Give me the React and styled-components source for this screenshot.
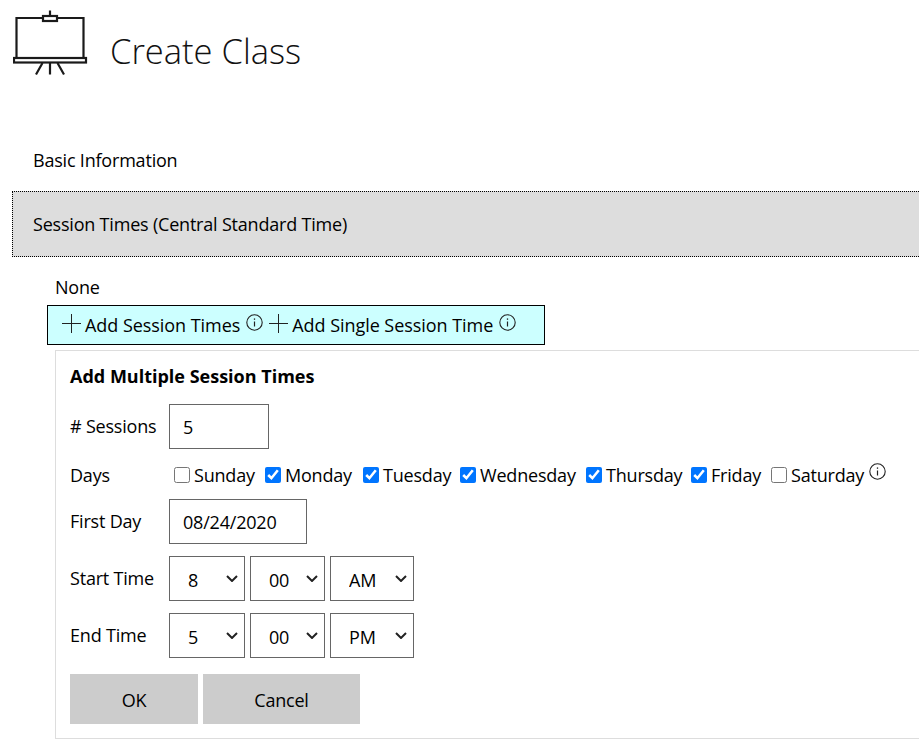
import React from 'react'
import styled, { createGlobalStyle } from 'styled-components'

const GlobalStyle = createGlobalStyle`
  html, body {
    margin: 0;
    padding: 0;
    background: #fff;
    overflow: hidden;
  }
  body {
    font-family: "Open Sans", "Noto Sans", sans-serif;
    font-size: 18px;
    letter-spacing: -0.2px;
    color: #000;
  }
`

const chevron = `url("data:image/svg+xml,%3Csvg xmlns='http://www.w3.org/2000/svg' width='12' height='7' fill='none' stroke='%23222' stroke-width='2'%3E%3Cpath d='M1 1l5 5 5-5'/%3E%3C/svg%3E")`

const Page = styled.div`
  width: 919px;
  height: 747px;
  overflow: hidden;
`

const PageHeader = styled.header`
  display: flex;
  align-items: center;
  height: 84px;
  padding: 0 0 0 13px;
  margin-bottom: 44px;
`

const BoardIcon = styled.svg`
  width: 76px;
  height: 70px;
  margin-top: 5px;
  flex: none;
`

const Title = styled.h1`
  margin: 16px 0 0 21px;
  font-size: 34.5px;
  font-weight: 300;
  letter-spacing: 0;
  color: #111;
`

const Section = styled.div`
  display: flex;
  align-items: center;
  margin-left: 12px;
  padding-left: ${p => (p.$active ? '20px' : '21px')};
  height: ${p => (p.$active ? '64px' : '63px')};
  background: ${p => (p.$active ? '#ddd' : 'transparent')};
  border: ${p => (p.$active ? '1px dotted #000' : 'none')};
  border-right: none;
`

const Body = styled.div`
  padding: 20px 0 0 47px;
`

const NoneText = styled.div`
  margin-left: 8px;
  height: 28px;
  line-height: 20px;
`

const AddBar = styled.div`
  display: flex;
  align-items: center;
  gap: 6px;
  box-sizing: border-box;
  width: 498px;
  height: 40px;
  padding-left: 14px;
  background: #ccffff;
  border: 1px solid #000;
`

const AddAction = styled.div`
  display: flex;
  align-items: center;
`

const AddLabel = styled.span`
  margin: 0 6px 0 4px;
  letter-spacing: -0.05px;
  white-space: nowrap;
`

const AddIcon = styled.svg`
  width: 19px;
  height: 19px;
  flex: none;
  margin-top: -3px;
`

const Info = styled.svg`
  width: 17px;
  height: 17px;
  flex: none;
  margin-top: ${p => p.$top ?? -6}px;
`

const Panel = styled.div`
  box-sizing: border-box;
  width: 900px;
  height: 389px;
  margin: 5px 0 0 8px;
  padding: 14px 14px 0;
  border: 1px solid #ddd;
  border-right: none;
`

const PanelTitle = styled.div`
  font-weight: 700;
  font-size: 18px;
  letter-spacing: 0;
  line-height: 22px;
  margin-bottom: 17px;
`

const Row = styled.div`
  display: flex;
  align-items: center;
  box-sizing: border-box;
  height: ${p => p.$height}px;
  padding-top: ${p => p.$top || 0}px;
  margin-bottom: ${p => p.$after || 0}px;
`

const RowLabel = styled.label`
  width: 99px;
  flex: none;
  padding-bottom: 2px;
`

const DaysLabel = styled(RowLabel)`
  padding-bottom: 0;
`

const TextInput = styled.input`
  box-sizing: border-box;
  width: ${p => p.$width}px;
  height: 45px;
  padding: 0 13px;
  border: 1px solid #666;
  border-radius: 0;
  font: inherit;
  letter-spacing: inherit;
  color: #000;
  outline: none;
`

const Days = styled.div`
  display: flex;
  align-items: center;
  margin-left: 4px;
`

const Day = styled.label`
  display: flex;
  align-items: center;
  width: ${p => p.$width}px;
  flex: none;
  white-space: nowrap;
`

const Check = styled.input.attrs({ type: 'checkbox' })`
  width: 16px;
  height: 16px;
  margin: 0 4px 0 1px;
  flex: none;
`

const Selects = styled.div`
  display: flex;
  gap: 5px;
`

const TimeSelect = styled.select`
  appearance: none;
  box-sizing: border-box;
  width: ${p => p.$width}px;
  height: 45px;
  padding: 2px 0 0 18px;
  border: 1px solid #666;
  border-radius: 0;
  background: #fff ${chevron} no-repeat right 6px center;
  font: inherit;
  letter-spacing: inherit;
  color: #000;
  outline: none;
`

const Buttons = styled.div`
  display: flex;
  gap: 5px;
  margin-top: 16px;
`

const Button = styled.button`
  width: ${p => p.$width}px;
  height: 50px;
  padding: 2px 0 0;
  border: none;
  background: #ccc;
  font: inherit;
  letter-spacing: inherit;
  color: #000;
`

function Board() {
  return (
    <BoardIcon viewBox="0 0 76 70" fill="none" stroke="#1a1a1a" strokeWidth="2.2">
      <path d="M3.5 48V8H70.5V48" />
      <rect x="30" y="6" width="14" height="5" fill="#fff" />
      <path d="M37 0.5V6" />
      <rect x="1" y="48" width="72" height="4.5" />
      <path d="M29.5 53L23 64.5M37 53V64.5M44.5 53L51 64.5" />
    </BoardIcon>
  )
}

function Plus() {
  return (
    <AddIcon viewBox="0 0 19 19" stroke="#222" strokeWidth="1" fill="none">
      <path d="M9.5 0V19M0 9.5H19" />
    </AddIcon>
  )
}

function InfoIcon({ top }) {
  return (
    <Info viewBox="0 0 17 17" $top={top} fill="none" stroke="#222">
      <circle cx="8.5" cy="8.5" r="7.7" strokeWidth="1.1" />
      <path d="M8.5 7.5V12.5" strokeWidth="1.2" />
      <path d="M8.5 4.4V5.8" strokeWidth="1.3" />
    </Info>
  )
}

const days = [
  { name: 'Sunday', width: 91, checked: false },
  { name: 'Monday', width: 98, checked: true },
  { name: 'Tuesday', width: 97, checked: true },
  { name: 'Wednesday', width: 126, checked: true },
  { name: 'Thursday', width: 105, checked: true },
  { name: 'Friday', width: 80, checked: true },
  { name: 'Saturday', width: 99, checked: false },
]

function Time({ hour, minute, ampm }) {
  return (
    <Selects>
      <TimeSelect $width={76} defaultValue={hour}>
        {[1, 2, 3, 4, 5, 6, 7, 8, 9, 10, 11, 12].map(h => <option key={h}>{h}</option>)}
      </TimeSelect>
      <TimeSelect $width={75} defaultValue={minute}>
        {['00', '15', '30', '45'].map(m => <option key={m}>{m}</option>)}
      </TimeSelect>
      <TimeSelect $width={84} defaultValue={ampm}>
        <option>AM</option>
        <option>PM</option>
      </TimeSelect>
    </Selects>
  )
}

export default function App() {
  return (
    <Page>
      <GlobalStyle />
      <PageHeader>
        <Board />
        <Title>Create Class</Title>
      </PageHeader>

      <Section>Basic Information</Section>
      <Section $active>Session Times (Central Standard Time)</Section>

      <Body>
        <NoneText>None</NoneText>
        <AddBar>
          <AddAction>
            <Plus />
            <AddLabel>Add Session Times</AddLabel>
            <InfoIcon />
          </AddAction>
          <AddAction>
            <Plus />
            <AddLabel>Add Single Session Time</AddLabel>
            <InfoIcon />
          </AddAction>
        </AddBar>

        <Panel>
          <PanelTitle>Add Multiple Session Times</PanelTitle>
          <Row $height={45}>
            <RowLabel># Sessions</RowLabel>
            <TextInput $width={100} defaultValue="5" />
          </Row>
          <Row $height={50} $top={2}>
            <DaysLabel>Days</DaysLabel>
            <Days>
              {days.map(d => (
                <Day key={d.name} $width={d.width}>
                  <Check defaultChecked={d.checked} />
                  {d.name}
                </Day>
              ))}
              <InfoIcon top={-8} />
            </Days>
          </Row>
          <Row $height={45} $after={12}>
            <RowLabel>First Day</RowLabel>
            <TextInput $width={138} defaultValue="08/24/2020" />
          </Row>
          <Row $height={45} $after={12}>
            <RowLabel>Start Time</RowLabel>
            <Time hour="8" minute="00" ampm="AM" />
          </Row>
          <Row $height={45}>
            <RowLabel>End Time</RowLabel>
            <Time hour="5" minute="00" ampm="PM" />
          </Row>
          <Buttons>
            <Button $width={128}>OK</Button>
            <Button $width={157}>Cancel</Button>
          </Buttons>
        </Panel>
      </Body>
    </Page>
  )
}
